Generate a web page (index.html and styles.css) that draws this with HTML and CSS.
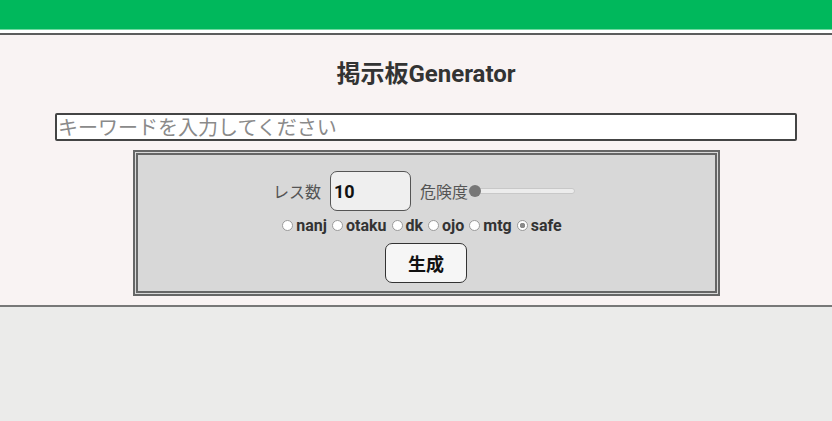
FILE: index.html
```html
<!DOCTYPE html>
<html lang="ja">
<head>
<meta charset="utf-8">
<title>掲示板Generator</title>
<link rel="stylesheet" href="styles.css">
</head>
<body>
<header class="topbar"></header>
<div class="gap"></div>
<main class="main">
  <div class="wrap">
    <h1 class="title">掲示板Generator</h1>
    <input class="keyword" type="text" placeholder="キーワードを入力してください">
    <div class="panel">
      <div class="row">
        <span class="label">レス数</span>
        <input class="num" type="text" value="10">
        <span class="label danger">危険度</span>
        <input class="range" type="range" min="0" max="100" value="0">
      </div>
      <div class="radios">
        <label class="opt"><input type="radio" name="b">nanj</label>
        <label class="opt"><input type="radio" name="b">otaku</label>
        <label class="opt"><input type="radio" name="b">dk</label>
        <label class="opt"><input type="radio" name="b">ojo</label>
        <label class="opt"><input type="radio" name="b">mtg</label>
        <label class="opt"><input type="radio" name="b" checked>safe</label>
      </div>
      <button class="gen">生成</button>
    </div>
  </div>
</main>
<footer class="bottom"></footer>
</body>
</html>
```
FILE: styles.css
```css
html, body { margin: 0; padding: 0; }
body {
  background: #ebebea;
  font-family: Roboto, "Noto Sans CJK JP", sans-serif;
  height: 421px;
  overflow: hidden;
}
.topbar {
  height: 29px;
  background: #00b85c;
  border-bottom: 1px solid #6fd9a0;
}
.gap {
  height: 3px;
  background: #ffffff;
  border-bottom: 2px solid #5c5c5c;
}
.main {
  background: #f9f3f3;
  padding: 27px 0 9px;
  border-bottom: 2px solid #787878;
}
.wrap {
  margin-left: 55px;
  width: 742px;
  display: flex;
  flex-direction: column;
  align-items: center;
}
.title {
  margin: 0;
  font-size: 24px;
  line-height: 24px;
  font-weight: bold;
  color: #333;
  font-family: Roboto, "Noto Sans CJK JP", sans-serif;
}
.keyword {
  box-sizing: border-box;
  margin-top: 27px;
  width: 742px;
  height: 28px;
  border: 2px solid #444;
  border-radius: 2px;
  background: #fff;
  padding: 0 1px 2px;
  font-size: 20px;
  font-family: "Noto Sans CJK JP", sans-serif;
  outline: none;
}
.keyword::placeholder { color: #8a8a8a; }
.panel {
  box-sizing: border-box;
  margin-top: 9px;
  width: 587px;
  height: 146px;
  background: #d8d8d8;
  border: 5px double #666;
  padding-top: 16px;
  display: flex;
  flex-direction: column;
  align-items: center;
}
.row {
  display: flex;
  align-items: center;
  height: 40px;
  margin-right: 4px;
}
.label {
  font-family: "Noto Sans CJK JP", sans-serif;
  font-size: 16px;
  color: #555;
  margin-right: 9px;
}
.danger { margin-left: 9px; margin-right: 0; }
.num {
  box-sizing: border-box;
  width: 81px;
  height: 40px;
  border: 1px solid #555;
  border-radius: 7px;
  background: #efefef;
  font-family: Roboto, sans-serif;
  font-weight: bold;
  font-size: 18px;
  color: #111;
  padding: 0 3px;
  outline: none;
}
.range {
  -webkit-appearance: none;
  appearance: none;
  width: 107px;
  height: 12px;
  margin: 0;
  background: transparent;
}
.range::-webkit-slider-runnable-track {
  height: 6px;
  background: #ececec;
  border: 1px solid #c8c8c8;
  border-radius: 4px;
}
.range::-webkit-slider-thumb {
  -webkit-appearance: none;
  width: 12px;
  height: 12px;
  border-radius: 50%;
  background: #777;
  margin-top: -4px;
}
.radios {
  display: flex;
  align-items: center;
  margin-top: 4px;
  margin-right: 8px;
  height: 20px;
}
.opt {
  display: flex;
  align-items: center;
  font-family: Roboto, sans-serif;
  font-weight: bold;
  font-size: 16px;
  color: #333;
  margin-right: 5px;
}
.opt:last-child { margin-right: 0; }
.opt input {
  -webkit-appearance: none;
  appearance: none;
  box-sizing: border-box;
  width: 11px;
  height: 11px;
  margin: 0 3px 0 0;
  border: 1px solid #9a9a9a;
  border-radius: 50%;
  background: #fff;
}
.opt input:checked {
  background: radial-gradient(circle, #8a8a8a 0 2.5px, #fff 3px);
}
.gen {
  margin-top: 8px;
  box-sizing: border-box;
  width: 82px;
  height: 40px;
  border: 1px solid #333;
  border-radius: 7px;
  background: #f6f6f6;
  font-family: "Noto Sans CJK JP", sans-serif;
  font-weight: bold;
  font-size: 18px;
  color: #111;
}
.bottom { height: 116px; }
```
